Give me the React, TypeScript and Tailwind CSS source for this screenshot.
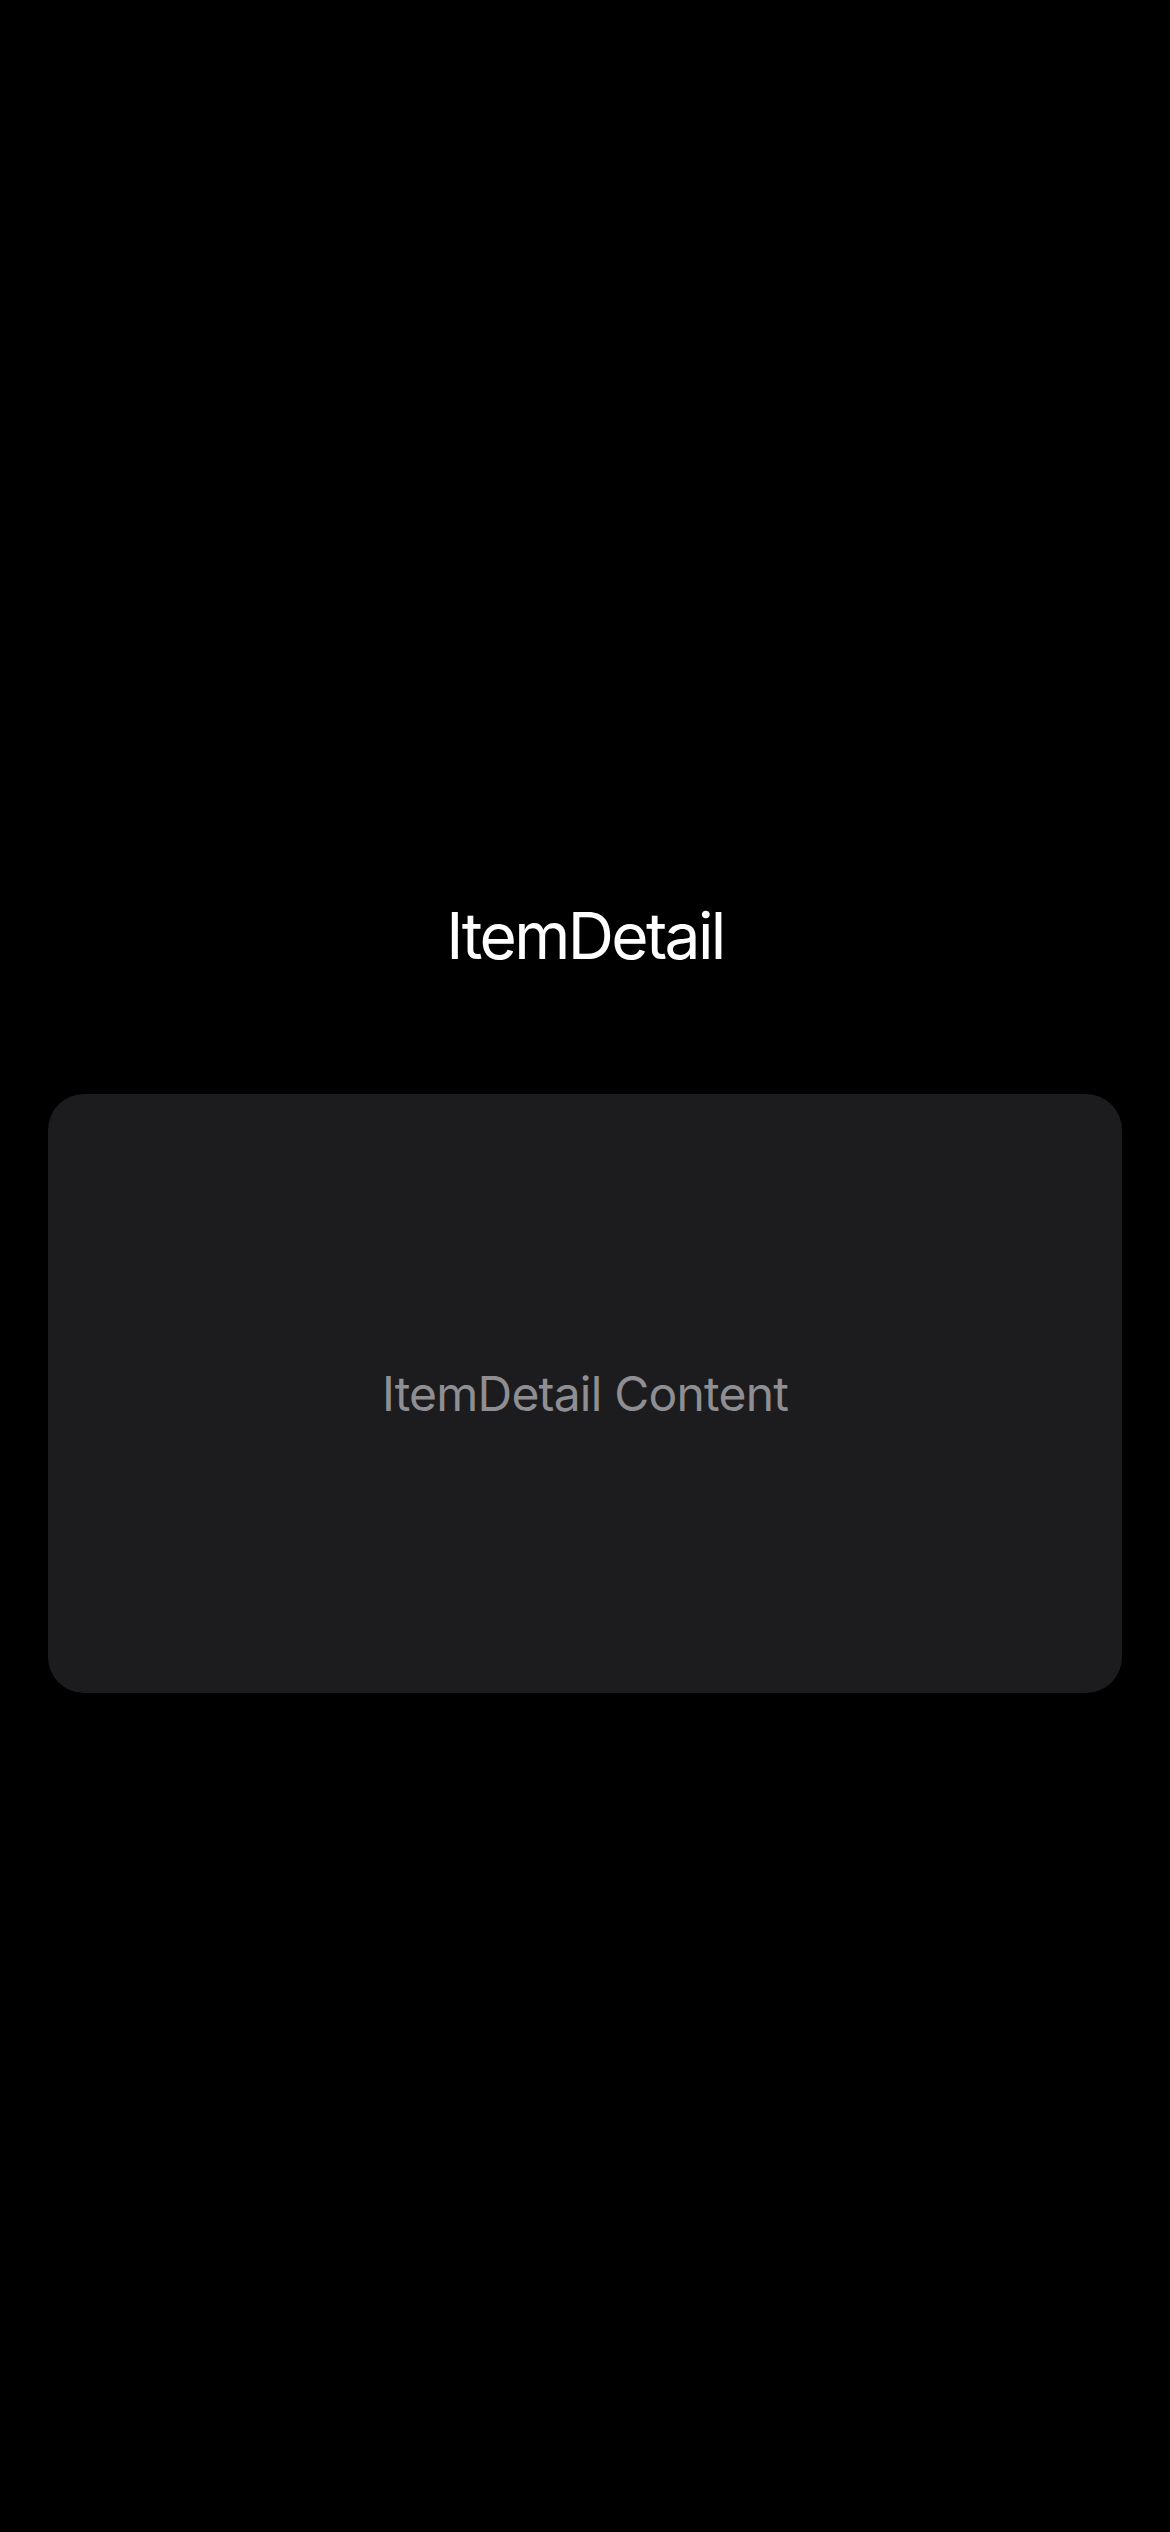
import React from 'react';

export default function App() {
  return (
    <div
      className="min-h-[2532px] w-full bg-black flex flex-col items-center pt-[897px] px-[48px]"
      style={{ fontFamily: 'Inter, "Noto Sans", sans-serif' }}
    >
      {/* Title */}
      <h1 className="text-white text-[64px] leading-[77px] font-normal tracking-[-2.6px]">ItemDetail</h1>

      {/* Content card */}
      <div className="mt-[120px] w-full h-[599px] rounded-[36px] bg-[#1c1c1e] flex items-center justify-center">
        <p className="text-[#8e8e93] text-[48px] leading-[58px] tracking-[-0.8px]">ItemDetail Content</p>
      </div>
    </div>
  );
}
